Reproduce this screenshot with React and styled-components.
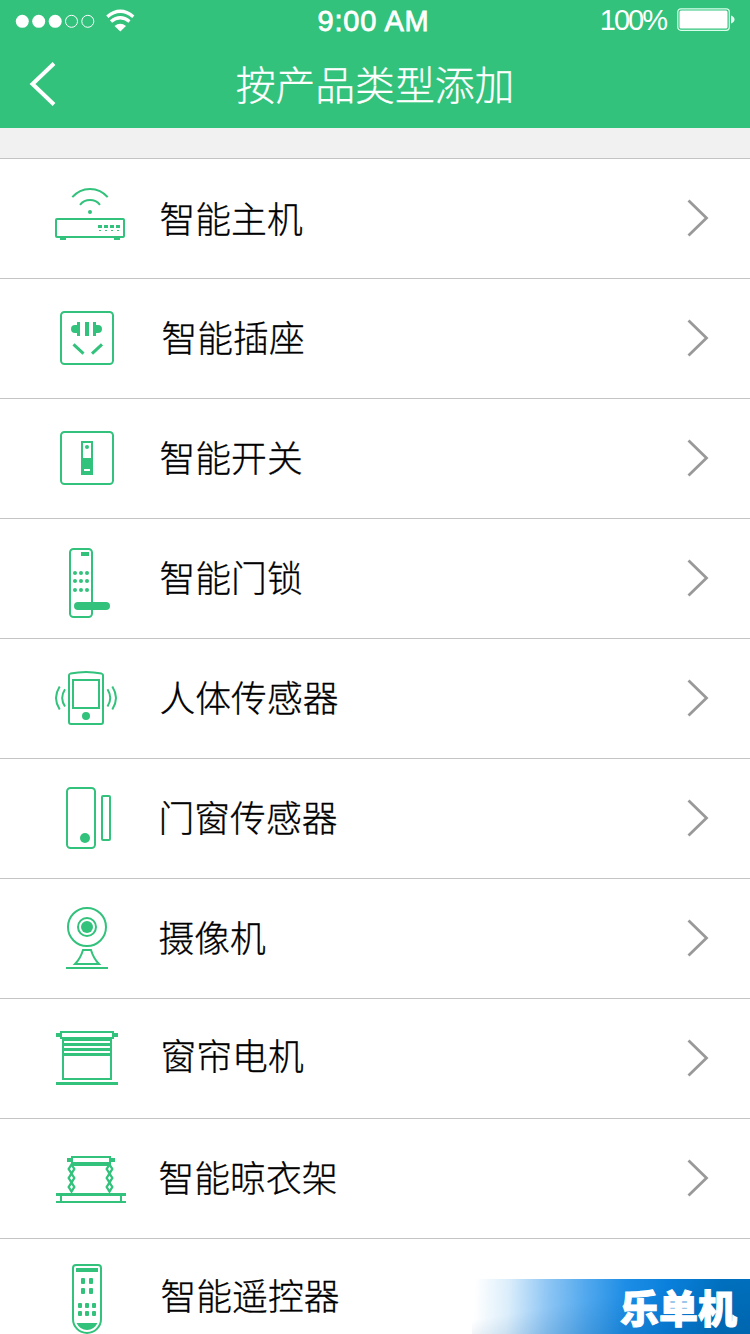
import styled, { createGlobalStyle } from "styled-components"

const colors = {
    primary: "#32c27c",
    background: "#f1f1f1",
    line: "#c4c4c4",
    arrow: "#999999",
}

// icons: x goes from 40 to 130, y from the top line of the row

function HubIcon() {
    return (
        <>
            <path d="M72.3 39.2A23 23 0 0 1 107.7 39.2" />
            <path d="M80 46.8A13 13 0 0 1 100 46.8" />
            <Solid as="circle" cx="90" cy="54" r="2" />
            <rect x="56" y="61" width="68" height="18" rx="1" />
            <Solid d="M60 80h6v2h-6zM114 80h6v2h-6z" />
            <Solid d="M98 67h4v3h-4zM104 67h4v3h-4zM110 67h4v3h-4zM116 67h4v3h-4z" />
            <Solid d="M99 72h2v1h-2zM105 72h2v1h-2zM111 72h2v1h-2zM117 72h2v1h-2z" />
        </>
    )
}

function SocketIcon() {
    return (
        <>
            <rect x="61" y="34" width="52" height="52" rx="3.5" />
            <Solid d="M77 44h3v14h-3v-3h-2a4 4 0 0 1 0-8h2z" />
            <Solid d="M85 44h4v14h-4z" />
            <Solid d="M96 44h-3v14h3v-3h2a4 4 0 0 0 0-8h-2z" />
            <path strokeWidth="3" d="M73.5 66.3l10 9.4M102 66.3l-10 9.4" />
        </>
    )
}

function SwitchIcon() {
    return (
        <>
            <rect x="61" y="34" width="52" height="52" rx="3.5" />
            <rect x="82" y="44" width="10" height="32" />
            <Solid as="circle" cx="87" cy="49" r="2" />
            <Solid fillRule="evenodd" d="M82 60h10v16H82zM84 71v2h6v-2z" />
        </>
    )
}

function LockIcon() {
    return (
        <>
            <rect x="70" y="31" width="22" height="68" rx="3.5" />
            <Solid d="M81 34h8v4h-8z" />
            {[55, 63, 72].map((y) =>
                [75, 81, 87].map((x) => (
                    <Solid as="circle" key={x + "-" + y} cx={x} cy={y} r="2" />
                ))
            )}
            <Solid as="rect" x="74" y="84" width="36" height="8" rx="4" />
        </>
    )
}

function BodySensorIcon() {
    return (
        <>
            <path d="M69 37Q69 36 70.5 35.6Q86 32.4 101.5 35.6Q103 36 103 37V84Q103 86 101 86H71Q69 86 69 84z" />
            <rect x="73" y="42" width="26" height="28" />
            <Solid as="circle" cx="86" cy="78" r="4" />
            <path d="M59.7 48.5Q52.3 60 59.7 71.5M65 51.3Q59.4 60 65 68.5" />
            <path d="M112.3 48.5Q119.7 60 112.3 71.5M107.5 51.3Q113 60 107.5 68.5" />
        </>
    )
}

function DoorSensorIcon() {
    return (
        <>
            <rect x="67" y="30" width="28" height="60" rx="3.5" />
            <rect x="102" y="38" width="8" height="44" rx="1" />
            <Solid as="circle" cx="85" cy="80" r="5" />
        </>
    )
}

function CameraIcon() {
    return (
        <>
            <circle cx="87" cy="49" r="19" />
            <circle cx="87" cy="49" r="9" />
            <Solid as="circle" cx="87" cy="49" r="6" />
            <path d="M83 72h8Q93.5 80.5 99 86H75Q80.5 80.5 83 72z" />
            <path d="M66 90h42" />
        </>
    )
}

function CurtainIcon() {
    return (
        <>
            <rect x="61" y="34" width="52" height="6" />
            <Solid d="M56 35h5v4h-5zM113 35h5v4h-5z" />
            <path d="M63 41V81H111V41" />
            <Solid d="M62 40h50v3H62zM62 45h50v3H62zM62 50h50v3H62zM62 55h50v3H62z" />
            <Solid d="M56 84h62v3H56z" />
        </>
    )
}

function HangerIcon() {
    return (
        <>
            <rect x="72" y="39" width="38" height="6" />
            <Solid d="M67 40h4v4h-4zM111 40h4v4h-4z" />
            <Solid d="M71 44h40v4H71z" />
            {[71.5, 109.5].map((x) =>
                [51, 60, 69].map((y) => (
                    <path
                        key={x + "-" + y}
                        strokeWidth="2.3"
                        d={`M${x} ${y - 4.5}l2.8 4.5l-2.8 4.5l-2.8 -4.5z`}
                    />
                ))
            )}
            <Solid d="M56 75h70v3H56zM56 83h70v2H56zM60 78h2v5h-2zM120 78h2v5h-2z" />
        </>
    )
}

function RemoteIcon() {
    return (
        <>
            <path d="M73 30Q73 27 76 27H98Q101 27 101 30V81A14 14 0 0 1 73 81z" />
            <Solid d="M76 30h22v4H76z" />
            {[40, 50].map((y) =>
                [81, 89].map((x) => (
                    <Solid as="rect" key={x + "-" + y} x={x} y={y} width="4" height="6" rx="1" />
                ))
            )}
            {[65, 73].map((y) =>
                [78, 85, 92].map((x) => (
                    <Solid as="rect" key={x + "-" + y} x={x} y={y} width="4" height="5" rx="1" />
                ))
            )}
            <Solid d="M76.5 85H97.5Q94 92 87 92Q80 92 76.5 85z" />
        </>
    )
}

const products = [
    { name: "智能主机", icon: HubIcon, left: 0, top: 0 },
    { name: "智能插座", icon: SocketIcon, left: 2, top: -1 },
    { name: "智能开关", icon: SwitchIcon, left: 0, top: -1 },
    { name: "智能门锁", icon: LockIcon, left: 0, top: -1 },
    { name: "人体传感器", icon: BodySensorIcon, left: 0, top: -1 },
    { name: "门窗传感器", icon: DoorSensorIcon, left: -1, top: -1 },
    { name: "摄像机", icon: CameraIcon, left: -1, top: -1 },
    { name: "窗帘电机", icon: CurtainIcon, left: 1, top: -3 },
    { name: "智能晾衣架", icon: HangerIcon, left: -1, top: -1 },
    { name: "智能遥控器", icon: RemoteIcon, left: 1, top: -3 },
]

export default function App() {
    return (
        <Page>
            <GlobalStyle />
            <Header>
                <StatusBar>
                    <Signal>
                        <svg width="120" height="28" viewBox="0 0 120 28">
                            <g fill="#fff">
                                <circle cx="7.3" cy="14.3" r="6.5" />
                                <circle cx="23.7" cy="14.3" r="6.5" />
                                <circle cx="40.2" cy="14.3" r="6.5" />
                                <path d="M105.3 24.5L99.5 19Q105.3 14.5 111 19z" />
                            </g>
                            <g fill="none" stroke="#fff">
                                <circle cx="56.5" cy="14.3" r="6" />
                                <circle cx="72.8" cy="14.3" r="6" />
                                <path strokeWidth="3.3" d="M92.3 9.7Q105.3 -1.3 118.3 9.7" />
                                <path strokeWidth="3.3" d="M96 14.5Q105.3 7 114.5 14.5" />
                            </g>
                        </svg>
                    </Signal>
                    <Time>9:00 AM</Time>
                    <Battery>
                        <Percent>100%</Percent>
                        <svg width="58" height="24" viewBox="0 0 58 24">
                            <rect x="0.8" y="0.8" width="51.5" height="21.5" rx="3" fill="none" stroke="#d9ffec" strokeWidth="1.2" />
                            <rect x="2.5" y="2.5" width="48" height="18" rx="1.5" fill="#fff" />
                            <path d="M54 7.5Q57.5 9 57.5 11.5T54 15.5z" fill="#e6fff2" />
                        </svg>
                    </Battery>
                </StatusBar>
                <NavBar>
                    <BackButton aria-label="返回">
                        <svg width="28" height="46" viewBox="0 0 28 46">
                            <path d="M25 2.5L3.5 23L25 43.5" fill="none" stroke="#fff" strokeWidth="4" />
                        </svg>
                    </BackButton>
                    <Title>按产品类型添加</Title>
                </NavBar>
            </Header>
            <List>
                {products.map(({ name, icon: Icon, left, top }) => (
                    <Row key={name}>
                        <IconBox viewBox="40 1 90 119">
                            <Icon />
                        </IconBox>
                        <Label $left={left} $top={top}>
                            {name}
                        </Label>
                        <Arrow viewBox="0 0 22 38">
                            <path d="M1.5 1.5L19.5 19L1.5 36.5" />
                        </Arrow>
                    </Row>
                ))}
            </List>
            <Badge>乐单机</Badge>
        </Page>
    )
}

// style CSS

const GlobalStyle = createGlobalStyle`
    body {
        margin: 0;
        overflow: hidden;
        font-family: "Noto Sans CJK SC", sans-serif;
    }
`

const Page = styled.div`
    position: relative;
    width: 750px;
    height: 1334px;
    overflow: hidden;
    background-color: ${colors.background};
`

const Header = styled.header`
    height: 128px;
    background-color: ${colors.primary};
    color: white;
`

const StatusBar = styled.div`
    display: grid;
    grid-template-columns: 1fr auto 1fr;
    align-items: center;
    height: 42px;
    padding: 0 15px;
    box-sizing: border-box;
    font-family: "Liberation Sans", Arial, sans-serif;
`

const Signal = styled.div`
    display: flex;
    svg {
        display: block;
    }
`

const Time = styled.span`
    font-size: 29px;
    line-height: 42px;
    letter-spacing: 0.8px;
    padding-right: 3px;
    -webkit-text-stroke: 0.8px white;
`

const Battery = styled.div`
    display: flex;
    justify-content: flex-end;
    align-items: center;
    gap: 11px;
    padding-bottom: 3px;
`

const Percent = styled.span`
    font-size: 29px;
    line-height: 38px;
    letter-spacing: -2px;
`

const NavBar = styled.div`
    display: grid;
    grid-template-columns: 100px 1fr 100px;
    align-items: center;
    height: 84px;
`

const BackButton = styled.button`
    display: flex;
    padding: 0 0 0 29px;
    border: none;
    background: none;
`

const Title = styled.h1`
    margin: 0;
    padding-bottom: 2px;
    font-size: 39.8px;
    font-weight: 300;
    line-height: 82px;
    text-align: center;
    -webkit-text-stroke: 0.3px white;
`

const List = styled.ul`
    margin: 30px 0 0;
    padding: 0;
    list-style: none;
`

const Row = styled.li`
    display: flex;
    align-items: center;
    height: 119px;
    padding: 0 41px 0 40px;
    border-top: 1px solid ${colors.line};
    background-color: white;
`

const IconBox = styled.svg`
    flex: none;
    width: 90px;
    height: 119px;
    fill: none;
    stroke: ${colors.primary};
    stroke-width: 2;
`

const Solid = styled.path`
    fill: ${colors.primary};
    stroke: none;
`

const Label = styled.span`
    flex: 1;
    margin-left: ${(props) => 29.5 + props.$left}px;
    margin-top: ${(props) => props.$top * 2 - 3}px;
    font-size: 35.8px;
    font-weight: 300;
    line-height: 52px;
    color: black;
    -webkit-text-stroke: 0.3px black;
`

const Arrow = styled.svg`
    flex: none;
    width: 22px;
    height: 38px;
    margin-bottom: 1px;
    fill: none;
    stroke: ${colors.arrow};
    stroke-width: 2.8;
`

const Badge = styled.div`
    position: absolute;
    right: 0;
    bottom: 0;
    width: 278px;
    height: 55px;
    padding-right: 13px;
    box-sizing: border-box;
    background:
        linear-gradient(
            350deg,
            rgba(0, 70, 130, 0.25),
            rgba(0, 70, 130, 0) 60%
        ),
        linear-gradient(
            92deg,
            rgba(255, 255, 255, 0) 1%,
            #dceefb 13%,
            #8fc6f4 27%,
            #55aaee 40%,
            #1d8de5 55%,
            #0a80dc 70%,
            #0070be 90%
        );
    color: white;
    font-size: 39px;
    font-weight: 900;
    line-height: 54px;
    text-align: right;
    -webkit-text-stroke: 1px white;
`
